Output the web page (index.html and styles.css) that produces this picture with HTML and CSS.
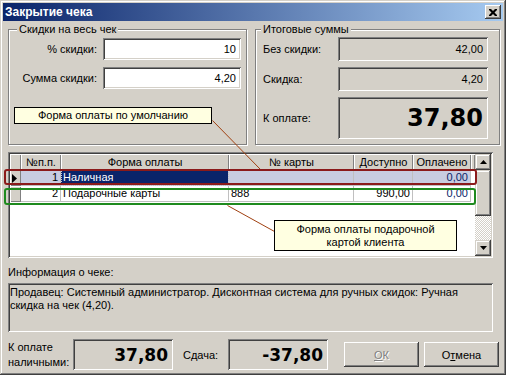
FILE: index.html
```html
<!DOCTYPE html>
<html lang="ru">

<head>
    <meta charset="UTF-8">
    <title>Закрытие чека</title>
    <link rel="stylesheet" href="styles.css">
</head>

<body>
    <div class="window">
        <div class="titlebar">
            <span class="title">Закрытие чека</span>
            <button class="close-btn" type="button">
                <svg width="8" height="7" viewBox="0 0 8 7">
                    <path d="M0 0h2l2 2 2-2h2v1l-2.5 2.5L8 6v1H6L4 5 2 7H0V6l2.5-2.5L0 1z" fill="#000" />
                </svg>
            </button>
        </div>

        <div class="dialog">
            <div class="top-row">
                <fieldset class="group group-discount">
                    <legend>Скидки на весь чек</legend>
                    <div class="field-row first">
                        <label>% скидки:</label>
                        <div class="edit">10</div>
                    </div>
                    <div class="field-row">
                        <label>Сумма скидки:</label>
                        <div class="edit">4,20</div>
                    </div>
                    <div class="hint hint-default">Форма оплаты по умолчанию</div>
                </fieldset>

                <fieldset class="group group-totals">
                    <legend>Итоговые суммы</legend>
                    <div class="total-row first">
                        <span class="total-label">Без скидки:</span>
                        <div class="readonly">42,00</div>
                    </div>
                    <div class="total-row">
                        <span class="total-label">Скидка:</span>
                        <div class="readonly">4,20</div>
                    </div>
                    <div class="total-row big">
                        <span class="total-label">К оплате:</span>
                        <div class="readonly big-value">37,80</div>
                    </div>
                </fieldset>
            </div>

            <!-- Payments grid -->
            <div class="pay-grid">
                <div class="grid-main">
                    <div class="grid-head">
                        <div class="hcell"></div>
                        <div class="hcell">№п.п.</div>
                        <div class="hcell">Форма оплаты</div>
                        <div class="hcell">№ карты</div>
                        <div class="hcell">Доступно</div>
                        <div class="hcell">Оплачено</div>
                        <div class="hcell filler"></div>
                    </div>
                    <div class="grid-row selected">
                        <div class="ind">
                            <svg width="5" height="9" viewBox="0 0 5 9"><path d="M0 0l5 4.5L0 9z" fill="#000" /></svg>
                        </div>
                        <div class="cell num">1</div>
                        <div class="cell focus">Наличная</div>
                        <div class="cell"></div>
                        <div class="cell num"></div>
                        <div class="cell num paid">0,00</div>
                        <div class="cell filler"></div>
                    </div>
                    <div class="grid-row">
                        <div class="ind"></div>
                        <div class="cell num">2</div>
                        <div class="cell">Подарочные карты</div>
                        <div class="cell">888</div>
                        <div class="cell num">990,00</div>
                        <div class="cell num paid">0,00</div>
                        <div class="cell filler"></div>
                    </div>
                </div>
                <div class="scrollbar">
                    <div class="sb-btn">
                        <svg width="7" height="4" viewBox="0 0 7 4"><path d="M3.5 0L7 4H0z" fill="#000" /></svg>
                    </div>
                    <div class="sb-thumb"></div>
                    <div class="sb-track"></div>
                    <div class="sb-btn">
                        <svg width="7" height="4" viewBox="0 0 7 4"><path d="M0 0h7L3.5 4z" fill="#000" /></svg>
                    </div>
                </div>
            </div>

            <div class="info-label">Информация о чеке:</div>
            <div class="info-box">Продавец: Системный администратор. Дисконтная система для ручных скидок: Ручная скидка на чек (4,20).</div>

            <div class="bottom-row">
                <span class="cash-label">К оплате<br>наличными:</span>
                <div class="readonly sum-box">37,80</div>
                <span class="change-label">Сдача:</span>
                <div class="readonly sum-box">-37,80</div>
                <button class="btn btn-ok" type="button" disabled><u>О</u>К</button>
                <button class="btn btn-cancel" type="button">О<u>т</u>мена</button>
            </div>
        </div>

        <!-- Annotation overlay -->
        <svg class="annotations" width="506" height="375" viewBox="0 0 506 375">
            <line x1="212.5" y1="120.5" x2="260.5" y2="169.5" stroke="#a04010" />
            <line x1="227.5" y1="205.5" x2="274.5" y2="231.5" stroke="#a04010" />
            <rect x="5" y="170" width="471" height="14" rx="2" fill="none" stroke="#8b1a1a" stroke-width="2" />
            <rect x="5" y="189" width="470" height="15" rx="2" fill="none" stroke="#1e8a1e" stroke-width="2" />
        </svg>
        <div class="hint hint-card">Форма оплаты подарочной<br>картой клиента</div>
    </div>
</body>

</html>
```

FILE: styles.css
```css
/* Basic Reset */
* {
    margin: 0;
    padding: 0;
    box-sizing: border-box;
}

body {
    font-family: 'Liberation Sans', Arial, sans-serif;
    font-size: 11px;
    color: #000;
    background-color: #d4d0c8;
}

/* Window frame */
.window {
    position: relative;
    width: 506px;
    height: 375px;
    padding: 3px;
    background-color: #d4d0c8;
    box-shadow: inset -1px -1px #404040, inset 1px 1px #d4d0c8,
        inset -2px -2px #808080, inset 2px 2px #fff;
}

.titlebar {
    height: 18px;
    display: flex;
    align-items: center;
    justify-content: space-between;
    padding: 0 2px;
    background: linear-gradient(to right, #0a246a, #a6caf0);
}

.title {
    color: #fff;
    font-weight: bold;
    font-size: 12px;
}

.close-btn {
    width: 16px;
    height: 14px;
    border: none;
    display: flex;
    align-items: center;
    justify-content: center;
    background-color: #d4d0c8;
    box-shadow: inset -1px -1px #404040, inset 1px 1px #fff, inset -2px -2px #808080;
}

.dialog {
    padding: 2px 0 0 5px;
}

/* Group boxes */
.top-row {
    display: flex;
    gap: 8px;
}

.group {
    height: 122px;
    min-width: 0;
    border: 1px solid #808080;
    box-shadow: inset 1px 1px #fff, 1px 1px #fff;
}

.group legend {
    padding: 0 2px;
    line-height: 13px;
    background-color: #d4d0c8;
}

.group-discount {
    width: 239px;
}

.group-discount legend {
    margin-left: 8px;
}

.group-totals {
    width: 245px;
}

.group-totals legend {
    margin-left: 5px;
}

.field-row {
    display: flex;
    align-items: center;
    height: 22px;
    margin-top: 7px;
}

.field-row.first {
    margin-top: 2px;
}

.field-row label {
    width: 88px;
    text-align: right;
    margin-right: 6px;
}

.edit,
.readonly {
    height: 100%;
    padding-right: 5px;
    text-align: right;
    display: flex;
    align-items: center;
    justify-content: flex-end;
    box-shadow: inset 1px 1px #808080, inset -1px -1px #fff,
        inset 2px 2px #404040, inset -2px -2px #d4d0c8;
}

.edit {
    width: 138px;
    background-color: #fff;
}

.readonly {
    background-color: #d4d0c8;
}

.total-row {
    display: flex;
    align-items: center;
    height: 24px;
    margin-top: 6px;
    padding-left: 7px;
}

.total-row.first {
    margin-top: 1px;
}

.total-row.big {
    height: 42px;
}

.total-label {
    width: 75px;
}

.total-row .readonly {
    width: 150px;
}

.big-value {
    font-family: 'DejaVu Sans', sans-serif;
    font-weight: bold;
    font-size: 24px;
}

/* Yellow callouts */
.hint {
    background-color: #ffffe1;
    border: 1px solid #000;
    text-align: center;
    line-height: 13px;
}

.hint-default {
    width: 198px;
    height: 17px;
    margin: 18px 0 0 5px;
    padding-top: 1px;
}

.hint-card {
    position: absolute;
    left: 274px;
    top: 220px;
    width: 183px;
    height: 31px;
    padding-top: 2px;
}

/* Payments grid */
.pay-grid {
    display: flex;
    width: 485px;
    height: 106px;
    margin-top: 7px;
    padding: 2px;
    background-color: #fff;
    box-shadow: inset 1px 1px #808080, inset -1px -1px #fff,
        inset 2px 2px #404040, inset -2px -2px #d4d0c8;
}

.grid-main {
    flex: 1;
}

.grid-head,
.grid-row {
    display: grid;
    grid-template-columns: 11px 40px 168px 125px 59px 58px 1fr;
    height: 16px;
}

.grid-head {
    background-color: #d4d0c8;
}

.hcell {
    line-height: 16px;
    text-align: center;
    white-space: nowrap;
    box-shadow: inset 1px 1px #fff, inset -1px -1px #808080;
}

.ind {
    display: flex;
    align-items: center;
    padding-left: 2px;
    background-color: #d4d0c8;
    box-shadow: inset 1px 1px #fff, inset -1px -1px #808080;
}

.cell {
    padding: 0 2px;
    line-height: 15px;
    white-space: nowrap;
    overflow: hidden;
    border-right: 1px solid #c0c0c0;
    border-bottom: 1px solid #c0c0c0;
}

.cell.num {
    text-align: right;
}

.cell.paid {
    color: #0a246a;
}

.cell.filler {
    border: none;
}

.grid-row.selected .cell {
    background-color: #c8cce0;
}

.grid-row.selected .cell.focus {
    background-color: #0a246a;
    color: #fff;
    outline: 1px dotted #c8cce0;
    outline-offset: -1px;
}

.grid-row.selected .cell.filler {
    background-color: #fff;
}

/* Scrollbar */
.scrollbar {
    width: 16px;
    display: flex;
    flex-direction: column;
}

.sb-btn,
.sb-thumb {
    background-color: #d4d0c8;
    box-shadow: inset -1px -1px #404040, inset 1px 1px #d4d0c8,
        inset -2px -2px #808080, inset 2px 2px #fff;
}

.sb-btn {
    height: 16px;
    display: flex;
    align-items: center;
    justify-content: center;
}

.sb-thumb {
    height: 46px;
}

.sb-track {
    flex: 1;
    background: repeating-conic-gradient(#fff 0 25%, #d4d0c8 0 50%) 0 0 / 2px 2px;
}

/* Receipt info */
.info-label {
    margin-top: 8px;
    line-height: 13px;
}

.info-box {
    width: 485px;
    height: 49px;
    margin-top: 4px;
    padding: 3px 2px;
    line-height: 13px;
    box-shadow: inset 1px 1px #808080, inset -1px -1px #fff,
        inset 2px 2px #404040, inset -2px -2px #d4d0c8;
}

/* Bottom bar */
.bottom-row {
    display: flex;
    align-items: center;
    height: 31px;
    margin-top: 7px;
}

.cash-label {
    width: 65px;
    line-height: 15px;
}

.sum-box {
    width: 100px;
    height: 31px;
    font-family: 'DejaVu Sans', sans-serif;
    font-weight: bold;
    font-size: 17px;
}

.change-label {
    width: 45px;
    margin-left: 10px;
}

.btn {
    width: 75px;
    height: 25px;
    border: none;
    font-family: inherit;
    font-size: 11px;
    color: #000;
    background-color: #d4d0c8;
    box-shadow: inset -1px -1px #404040, inset 1px 1px #fff, inset -2px -2px #808080;
}

.btn-ok {
    margin-left: 16px;
    color: #808080;
    text-shadow: 1px 1px #fff;
}

.btn-cancel {
    margin-left: 5px;
}

.annotations {
    position: absolute;
    left: 0;
    top: 0;
    pointer-events: none;
}
```
